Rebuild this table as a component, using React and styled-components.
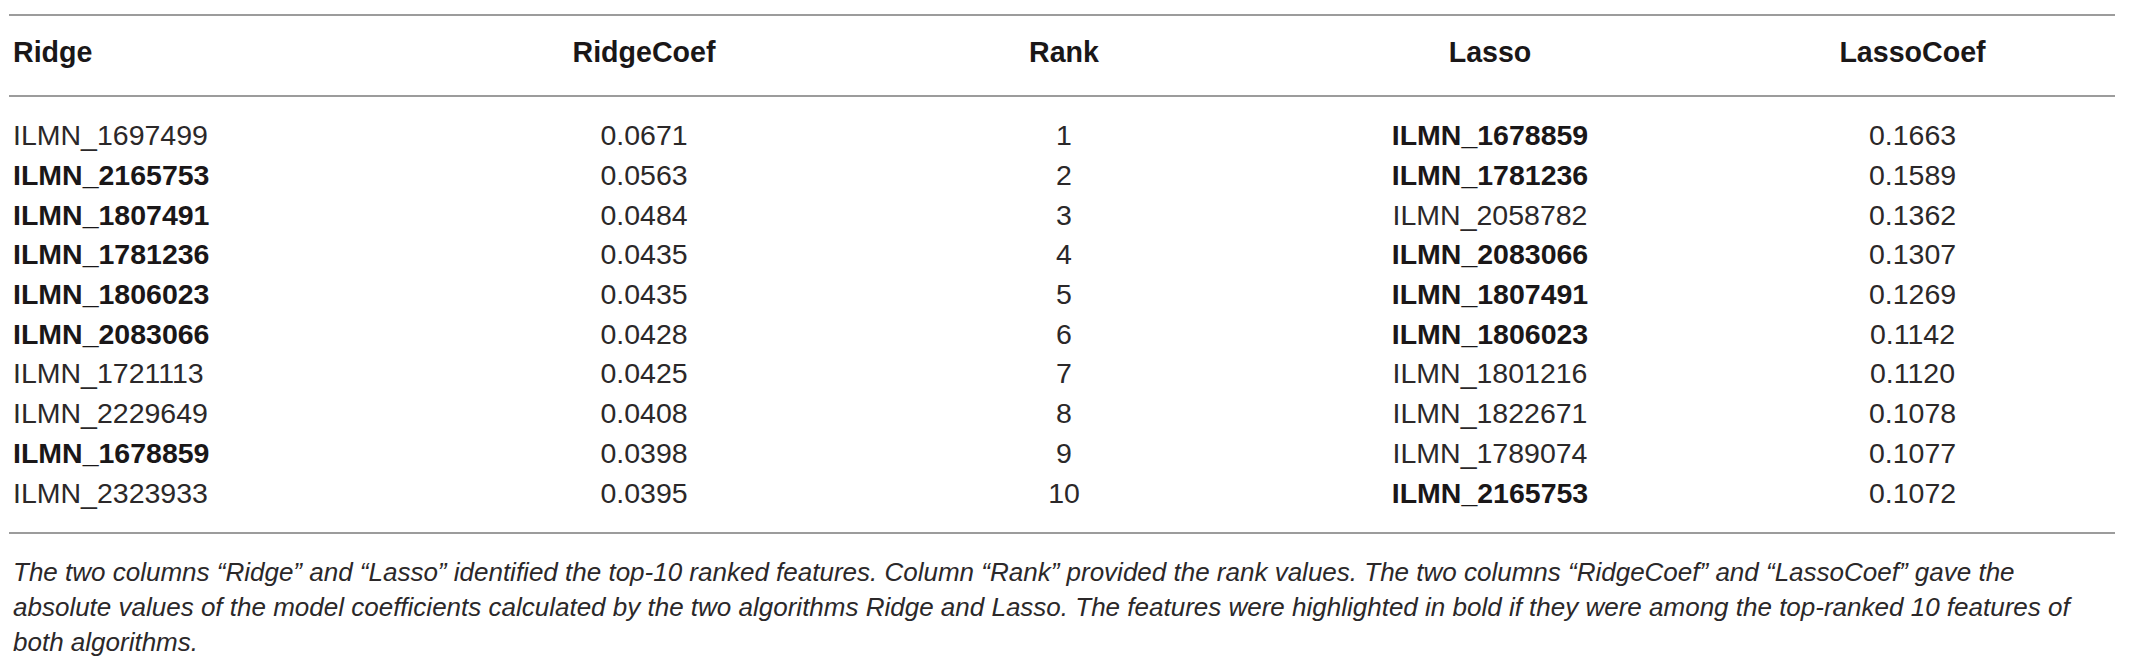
import React from "react";
import styled, { createGlobalStyle } from "styled-components";

const GlobalStyle = createGlobalStyle`
  body {
    margin: 0;
    background: #ffffff;
    font-family: "Liberation Sans", Arial, sans-serif;
    color: #231f20;
  }
`;

const Page = styled.div`
  width: 2130px;
  padding: 14px 15px 0 9px;
  box-sizing: border-box;
`;

const Table = styled.div`
  width: 2106px;
  border-top: 2px solid #9c9c9c;
  border-bottom: 2px solid #9c9c9c;
`;

const Row = styled.div`
  display: grid;
  grid-template-columns: 421px 428px 412px 440px 405px;
  align-items: center;
  height: ${(p) => p.$height || 39.7}px;
`;

const HeadRow = styled(Row)`
  box-sizing: border-box;
  padding-bottom: 7px;
  border-bottom: 2px solid #9c9c9c;
`;

const Body = styled.div`
  padding: 19px 0 19px;
`;

const HeadCell = styled.div`
  font-size: 28.6px;
  font-weight: 700;
  text-align: ${(p) => (p.$left ? "left" : "center")};
  padding-left: ${(p) => (p.$left ? "4px" : "0")};
  color: #1a1718;
`;

const Cell = styled.div`
  font-size: 28.5px;
  font-weight: ${(p) => (p.$bold ? 700 : 400)};
  text-align: ${(p) => (p.$left ? "left" : "center")};
  padding-left: ${(p) => (p.$left ? "4px" : "0")};
  color: ${(p) => (p.$bold ? "#1a1718" : "#2b2829")};
  white-space: nowrap;
`;

const Caption = styled.div`
  padding: 21px 0 0 4px;
  font-size: 26px;
  font-style: italic;
  line-height: 35.3px;
  color: #2b2829;
`;

const CaptionLine = styled.div`
  white-space: nowrap;
`;

const rows = [
  ["ILMN_1697499", false, "0.0671", 1, "ILMN_1678859", true, "0.1663"],
  ["ILMN_2165753", true, "0.0563", 2, "ILMN_1781236", true, "0.1589"],
  ["ILMN_1807491", true, "0.0484", 3, "ILMN_2058782", false, "0.1362"],
  ["ILMN_1781236", true, "0.0435", 4, "ILMN_2083066", true, "0.1307"],
  ["ILMN_1806023", true, "0.0435", 5, "ILMN_1807491", true, "0.1269"],
  ["ILMN_2083066", true, "0.0428", 6, "ILMN_1806023", true, "0.1142"],
  ["ILMN_1721113", false, "0.0425", 7, "ILMN_1801216", false, "0.1120"],
  ["ILMN_2229649", false, "0.0408", 8, "ILMN_1822671", false, "0.1078"],
  ["ILMN_1678859", true, "0.0398", 9, "ILMN_1789074", false, "0.1077"],
  ["ILMN_2323933", false, "0.0395", 10, "ILMN_2165753", true, "0.1072"],
];

export default function App() {
  return (
    <Page>
      <GlobalStyle />
      <Table>
        <HeadRow $height={81}>
          <HeadCell $left>Ridge</HeadCell>
          <HeadCell>RidgeCoef</HeadCell>
          <HeadCell>Rank</HeadCell>
          <HeadCell>Lasso</HeadCell>
          <HeadCell>LassoCoef</HeadCell>
        </HeadRow>
        <Body>
          {rows.map(([ridge, rb, rc, rank, lasso, lb, lc]) => (
            <Row key={rank}>
              <Cell $left $bold={rb}>{ridge}</Cell>
              <Cell>{rc}</Cell>
              <Cell>{rank}</Cell>
              <Cell $bold={lb}>{lasso}</Cell>
              <Cell>{lc}</Cell>
            </Row>
          ))}
        </Body>
      </Table>
      <Caption>
        <CaptionLine>
          The two columns “Ridge” and “Lasso” identified the top-10 ranked features. Column “Rank” provided the rank values. The two columns “RidgeCoef” and “LassoCoef” gave the
        </CaptionLine>
        <CaptionLine>
          absolute values of the model coefficients calculated by the two algorithms Ridge and Lasso. The features were highlighted in bold if they were among the top-ranked 10 features of
        </CaptionLine>
        <CaptionLine>both algorithms.</CaptionLine>
      </Caption>
    </Page>
  );
}
